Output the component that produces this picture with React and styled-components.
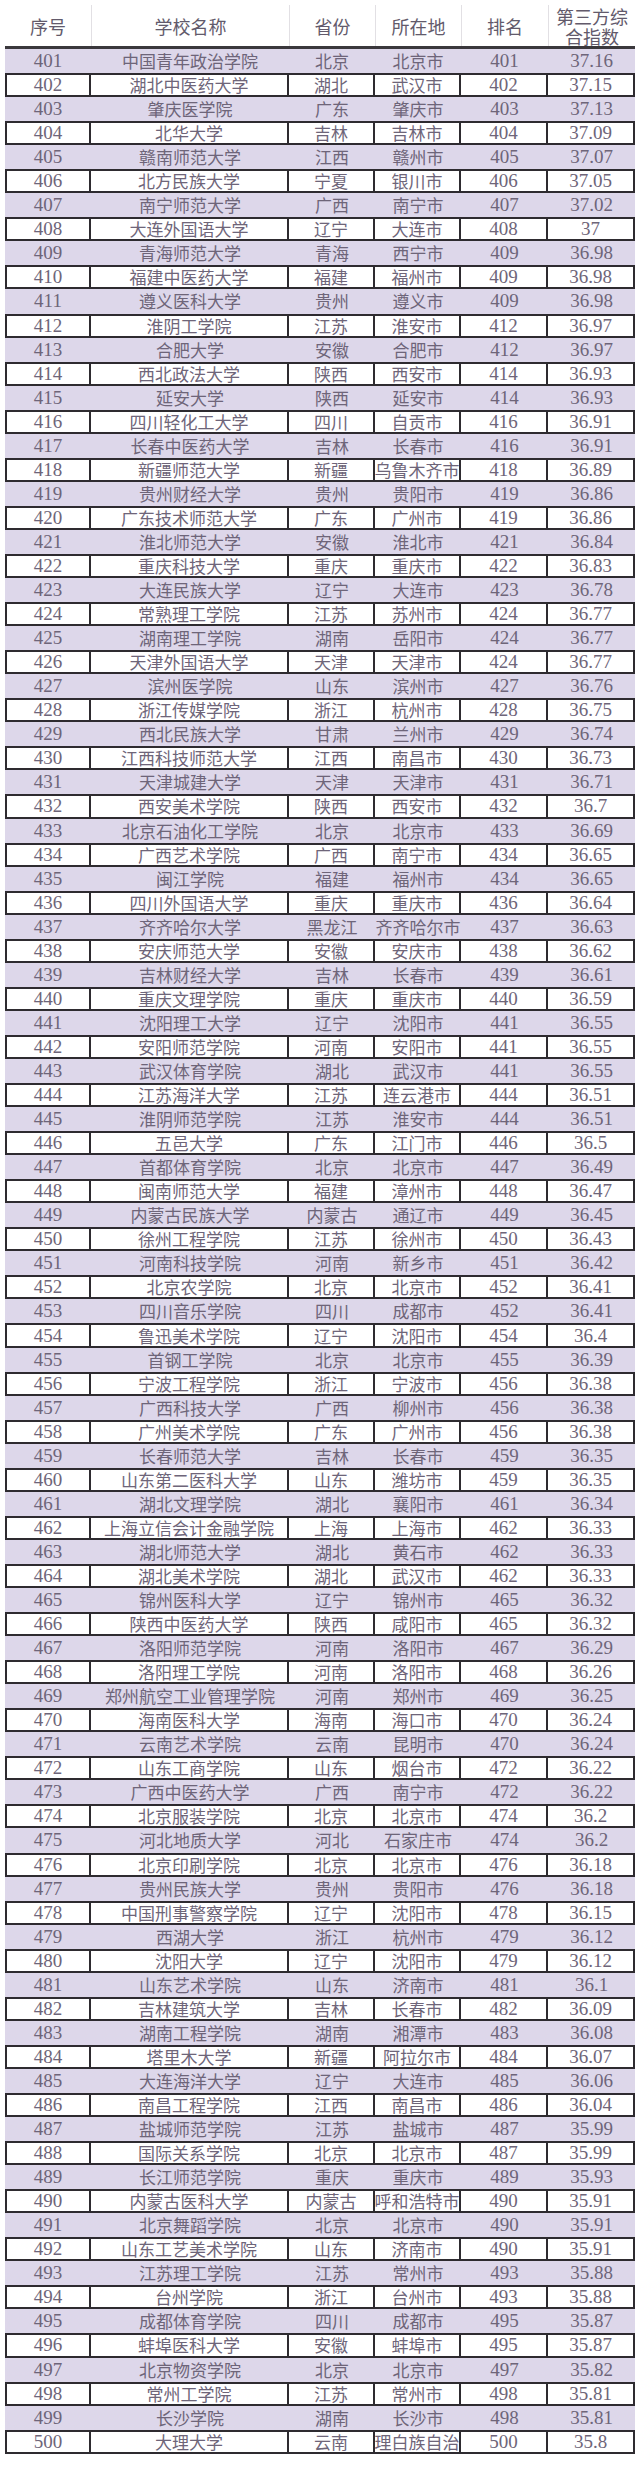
import React from 'react';
import styled, { createGlobalStyle, css } from 'styled-components';

const Global = createGlobalStyle`
  html, body { margin: 0; padding: 0; background: #ffffff; }
  body { width: 640px; }
`;

const COLS = '86px 198px 86px 86px 87px 87px';
const LINE = '#2e2b30';

const Page = styled.div`
  padding: 5px 5px 15px 5px;
  background: #ffffff;
`;

const Table = styled.div`
  width: 630px;
  display: flex;
  flex-direction: column;
`;

const HeaderRow = styled.div`
  display: grid;
  grid-template-columns: ${COLS};
  height: 44px;
  box-sizing: border-box;
  border-bottom: 3px solid #3a383c;
  background: #ffffff;
`;

const HeadCell = styled.div`
  display: flex;
  align-items: center;
  justify-content: center;
  text-align: center;
  font-family: "Noto Sans CJK SC", sans-serif;
  font-size: 18px;
  line-height: 20px;
  color: #625a6b;
  border-left: 1px solid #e2e0e4;
  &:first-child { border-left: none; }
`;

const HeadLines = styled.span`
  display: flex;
  flex-direction: column;
  align-items: center;
`;

const Row = styled.div`
  display: grid;
  grid-template-columns: ${COLS};
  height: 24.06px;
  box-sizing: border-box;
  background: ${p => (p.$shaded ? '#ddd7ea' : '#ffffff')};
  ${p => !p.$shaded && css`
    border-top: 2px solid ${LINE};
    border-bottom: 2px solid ${LINE};
  `}
`;

const Cell = styled.div`
  display: flex;
  align-items: center;
  justify-content: center;
  white-space: nowrap;
  box-sizing: border-box;
  min-width: 0;
  color: #6e6579;
  font-family: ${p => (p.$num ? '"Liberation Serif", serif' : '"Noto Sans CJK SC", sans-serif')};
  font-size: ${p => (p.$num ? '19px' : '17px')};
  line-height: 20px;
  ${p => p.$clip && css`overflow: hidden;`}
  ${p => p.$lined && css`
    border-right: 2px solid ${LINE};
    &:first-child { border-left: 2px solid ${LINE}; }
  `}
`;

const Text = styled.span`
  flex: none;
`;

const raw = `401 中国青年政治学院 北京 北京市 401 37.16
402 湖北中医药大学 湖北 武汉市 402 37.15
403 肇庆医学院 广东 肇庆市 403 37.13
404 北华大学 吉林 吉林市 404 37.09
405 赣南师范大学 江西 赣州市 405 37.07
406 北方民族大学 宁夏 银川市 406 37.05
407 南宁师范大学 广西 南宁市 407 37.02
408 大连外国语大学 辽宁 大连市 408 37
409 青海师范大学 青海 西宁市 409 36.98
410 福建中医药大学 福建 福州市 409 36.98
411 遵义医科大学 贵州 遵义市 409 36.98
412 淮阴工学院 江苏 淮安市 412 36.97
413 合肥大学 安徽 合肥市 412 36.97
414 西北政法大学 陕西 西安市 414 36.93
415 延安大学 陕西 延安市 414 36.93
416 四川轻化工大学 四川 自贡市 416 36.91
417 长春中医药大学 吉林 长春市 416 36.91
418 新疆师范大学 新疆 乌鲁木齐市 418 36.89
419 贵州财经大学 贵州 贵阳市 419 36.86
420 广东技术师范大学 广东 广州市 419 36.86
421 淮北师范大学 安徽 淮北市 421 36.84
422 重庆科技大学 重庆 重庆市 422 36.83
423 大连民族大学 辽宁 大连市 423 36.78
424 常熟理工学院 江苏 苏州市 424 36.77
425 湖南理工学院 湖南 岳阳市 424 36.77
426 天津外国语大学 天津 天津市 424 36.77
427 滨州医学院 山东 滨州市 427 36.76
428 浙江传媒学院 浙江 杭州市 428 36.75
429 西北民族大学 甘肃 兰州市 429 36.74
430 江西科技师范大学 江西 南昌市 430 36.73
431 天津城建大学 天津 天津市 431 36.71
432 西安美术学院 陕西 西安市 432 36.7
433 北京石油化工学院 北京 北京市 433 36.69
434 广西艺术学院 广西 南宁市 434 36.65
435 闽江学院 福建 福州市 434 36.65
436 四川外国语大学 重庆 重庆市 436 36.64
437 齐齐哈尔大学 黑龙江 齐齐哈尔市 437 36.63
438 安庆师范大学 安徽 安庆市 438 36.62
439 吉林财经大学 吉林 长春市 439 36.61
440 重庆文理学院 重庆 重庆市 440 36.59
441 沈阳理工大学 辽宁 沈阳市 441 36.55
442 安阳师范学院 河南 安阳市 441 36.55
443 武汉体育学院 湖北 武汉市 441 36.55
444 江苏海洋大学 江苏 连云港市 444 36.51
445 淮阴师范学院 江苏 淮安市 444 36.51
446 五邑大学 广东 江门市 446 36.5
447 首都体育学院 北京 北京市 447 36.49
448 闽南师范大学 福建 漳州市 448 36.47
449 内蒙古民族大学 内蒙古 通辽市 449 36.45
450 徐州工程学院 江苏 徐州市 450 36.43
451 河南科技学院 河南 新乡市 451 36.42
452 北京农学院 北京 北京市 452 36.41
453 四川音乐学院 四川 成都市 452 36.41
454 鲁迅美术学院 辽宁 沈阳市 454 36.4
455 首钢工学院 北京 北京市 455 36.39
456 宁波工程学院 浙江 宁波市 456 36.38
457 广西科技大学 广西 柳州市 456 36.38
458 广州美术学院 广东 广州市 456 36.38
459 长春师范大学 吉林 长春市 459 36.35
460 山东第二医科大学 山东 潍坊市 459 36.35
461 湖北文理学院 湖北 襄阳市 461 36.34
462 上海立信会计金融学院 上海 上海市 462 36.33
463 湖北师范大学 湖北 黄石市 462 36.33
464 湖北美术学院 湖北 武汉市 462 36.33
465 锦州医科大学 辽宁 锦州市 465 36.32
466 陕西中医药大学 陕西 咸阳市 465 36.32
467 洛阳师范学院 河南 洛阳市 467 36.29
468 洛阳理工学院 河南 洛阳市 468 36.26
469 郑州航空工业管理学院 河南 郑州市 469 36.25
470 海南医科大学 海南 海口市 470 36.24
471 云南艺术学院 云南 昆明市 470 36.24
472 山东工商学院 山东 烟台市 472 36.22
473 广西中医药大学 广西 南宁市 472 36.22
474 北京服装学院 北京 北京市 474 36.2
475 河北地质大学 河北 石家庄市 474 36.2
476 北京印刷学院 北京 北京市 476 36.18
477 贵州民族大学 贵州 贵阳市 476 36.18
478 中国刑事警察学院 辽宁 沈阳市 478 36.15
479 西湖大学 浙江 杭州市 479 36.12
480 沈阳大学 辽宁 沈阳市 479 36.12
481 山东艺术学院 山东 济南市 481 36.1
482 吉林建筑大学 吉林 长春市 482 36.09
483 湖南工程学院 湖南 湘潭市 483 36.08
484 塔里木大学 新疆 阿拉尔市 484 36.07
485 大连海洋大学 辽宁 大连市 485 36.06
486 南昌工程学院 江西 南昌市 486 36.04
487 盐城师范学院 江苏 盐城市 487 35.99
488 国际关系学院 北京 北京市 487 35.99
489 长江师范学院 重庆 重庆市 489 35.93
490 内蒙古医科大学 内蒙古 呼和浩特市 490 35.91
491 北京舞蹈学院 北京 北京市 490 35.91
492 山东工艺美术学院 山东 济南市 490 35.91
493 江苏理工学院 江苏 常州市 493 35.88
494 台州学院 浙江 台州市 493 35.88
495 成都体育学院 四川 成都市 495 35.87
496 蚌埠医科大学 安徽 蚌埠市 495 35.87
497 北京物资学院 北京 北京市 497 35.82
498 常州工学院 江苏 常州市 498 35.81
499 长沙学院 湖南 长沙市 498 35.81
500 大理大学 云南 大理白族自治州 500 35.8`;

const rows = raw.split('\n').map(l => l.trim().split(/\s+/));
const NUM = [true, false, false, false, true, true];

export default function App() {
  return (
    <>
      <Global />
      <Page>
        <Table>
          <HeaderRow>
            <HeadCell>序号</HeadCell>
            <HeadCell>学校名称</HeadCell>
            <HeadCell>省份</HeadCell>
            <HeadCell>所在地</HeadCell>
            <HeadCell>排名</HeadCell>
            <HeadCell>
              <HeadLines>
                <span>第三方综</span>
                <span>合指数</span>
              </HeadLines>
            </HeadCell>
          </HeaderRow>
          {rows.map((r, i) => {
            const shaded = i % 2 === 0;
            return (
              <Row key={r[0]} $shaded={shaded}>
                {r.map((v, j) => (
                  <Cell
                    key={j}
                    $num={NUM[j]}
                    $lined={!shaded}
                    $clip={j === 3 && v.length > 5}
                  >
                    <Text>{v}</Text>
                  </Cell>
                ))}
              </Row>
            );
          })}
        </Table>
      </Page>
    </>
  );
}
